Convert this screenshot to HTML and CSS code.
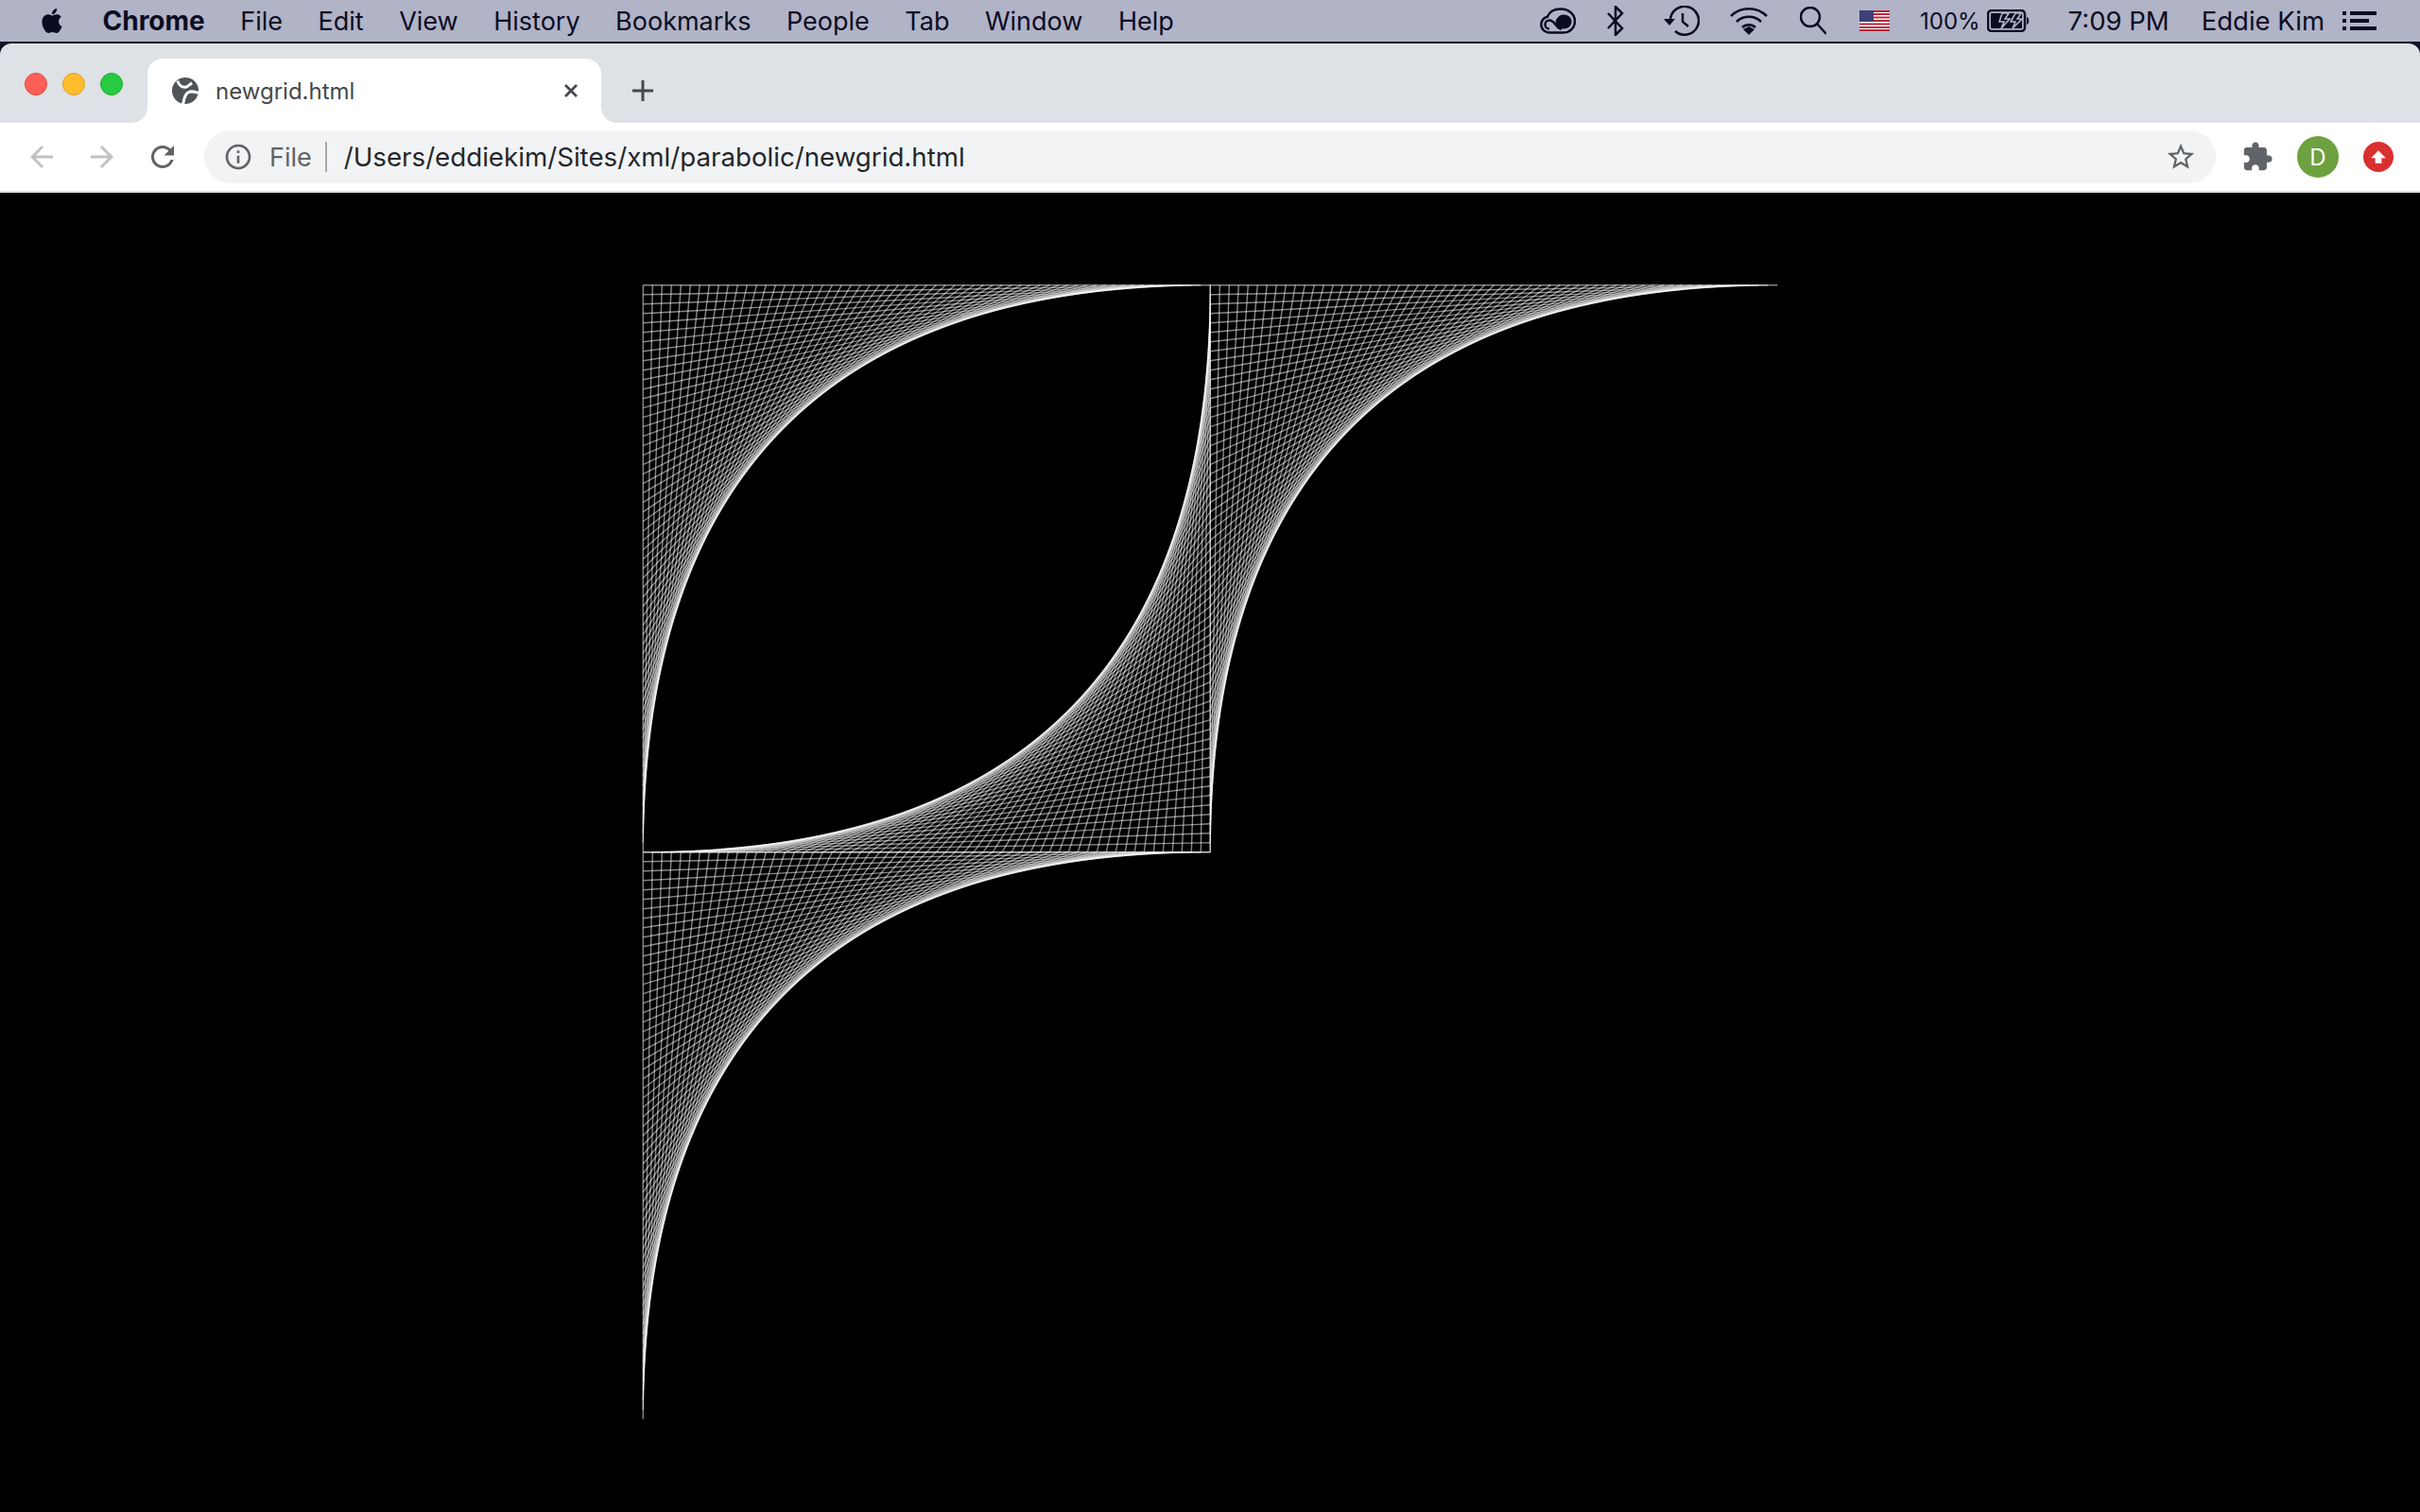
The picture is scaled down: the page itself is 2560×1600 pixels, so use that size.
FILE: index.html
```html
<!DOCTYPE html>
<html lang="en">
<head>
  <meta charset="UTF-8" />
  <title>newgrid.html</title>
  <link rel="stylesheet" href="styles.css">
</head>
<body>
  <header class="menubar">
    <nav class="menu-left">
      <svg class="apple" viewBox="0 0 24 24"><path d="M12.152 6.896c-.948 0-2.415-1.078-3.96-1.04-2.04.027-3.91 1.183-4.961 3.014-2.117 3.675-.546 9.103 1.519 12.09 1.013 1.454 2.208 3.09 3.792 3.039 1.52-.065 2.09-.987 3.935-.987 1.831 0 2.35.987 3.96.948 1.637-.026 2.676-1.48 3.676-2.948 1.156-1.688 1.636-3.325 1.662-3.415-.039-.013-3.182-1.221-3.22-4.857-.026-3.04 2.48-4.494 2.597-4.559-1.429-2.09-3.623-2.324-4.39-2.376-2-.156-3.675 1.09-4.61 1.09zM15.53 3.83c.843-1.012 1.4-2.427 1.245-3.83-1.207.052-2.662.805-3.532 1.818-.78.896-1.454 2.338-1.273 3.714 1.338.104 2.715-.688 3.559-1.701"/></svg>
      <span class="app-name">Chrome</span>
      <span>File</span>
      <span>Edit</span>
      <span>View</span>
      <span>History</span>
      <span>Bookmarks</span>
      <span>People</span>
      <span>Tab</span>
      <span>Window</span>
      <span>Help</span>
    </nav>
    <div class="menu-right">
      <svg class="st st-cc" viewBox="0 0 38 28"><path d="M10 26.500a8.500 8.500 0 0 1-2-16.800C10 4.500 15 1.500 22 1.500c8.500 0 15 5.500 15 13 0 7-5.500 12-12 12z" /><path d="M10 22.500a4.500 4.500 0 0 1 0-9c3.500 0 5 2.500 7 5 1.500 2 3.500 4 6 4" /><path class="solid" d="M17 13c2-3.500 4.500-5.500 8-5.500 5 0 8.500 3 8.500 7.500s-3.500 7.500-8.500 7.500c-3 0-5-1-7-4l-1.500-2z" /></svg>
      <svg class="st st-bt" viewBox="0 0 18 32"><path d="M1 8l15 16-7 7V1l7 7L1 24" /></svg>
      <svg class="st st-tm" viewBox="0 0 38 32"><path d="M7 16a15 15 0 1 1 5 11" /><path d="M20 8v9l6 5" /><path class="solid" d="M0 14h12l-6 7z" /></svg>
      <svg class="st st-wifi" viewBox="0 0 40 30"><path d="M1 10a27 27 0 0 1 38 0" /><path d="M7 16a19 19 0 0 1 26 0" /><path d="M13 22a10 10 0 0 1 14 0" /><path class="solid" d="M14 24l6-3 6 3-6 6z" /></svg>
      <svg class="st st-search" viewBox="0 0 28 30"><circle cx="11" cy="11" r="10" /><path d="M18 18l10 11" /></svg>
      <svg class="flag" viewBox="0 0 32 22"><rect width="32" height="22" fill="#fff"/><path d="M0 1h32M0 4h32M0 7.500h32M0 11h32M0 14.500h32M0 18h32M0 21h32" stroke="#b5283a" stroke-width="2"/><rect width="15" height="12" fill="#3d4177"/></svg>
      <span class="pct">100%</span>
      <svg class="st st-batt" viewBox="0 0 46 24"><rect x="1" y="1" width="39" height="22" rx="4" /><rect class="solid" x="4" y="4" width="33" height="16" rx="1" /><path class="bolt" d="M16 4h7l-4 6h5l-9 10 3-7h-5z" /><path class="bolt" d="M30 4h6l-4 6h5l-10 10 3-7h-5z" /><path class="solid" d="M42 8c3 1 3 7 0 8z" /></svg>
      <span class="clock">7:09 PM</span>
      <span class="user">Eddie Kim</span>
      <svg class="listicon" viewBox="0 0 36 20"><path d="M0 0h4v4H0zM8 0h28v4H8zM0 8h4v4H0zM8 8h20v4H8zM0 16h4v4H0zM8 16h28v4H8z"/></svg>
    </div>
  </header>

  <div class="window">
    <div class="tabstrip">
      <div class="lights">
        <i class="light red"></i>
        <i class="light yellow"></i>
        <i class="light green"></i>
      </div>
      <div class="tab">
        <svg class="favicon" viewBox="0 0 24 24"><circle cx="12" cy="12" r="12" fill="#505358"/><path d="M5 3C6 7 9 9.500 13 8.500 15 8 16 6.500 18 5M24 14C20 13 17 11.500 14 14 11 16.500 11 20 10 24" fill="none" stroke="#fff" stroke-width="2.600"/></svg>
        <span class="tab-title">newgrid.html</span>
        <svg class="tab-close" viewBox="0 0 16 16"><path d="M2 2l12 12M14 2L2 14"/></svg>
      </div>
      <svg class="newtab" viewBox="0 0 24 24"><path d="M12 1v22M1 12h22"/></svg>
    </div>

    <div class="toolbar">
      <svg class="nav-icon faded" viewBox="0 0 24 24"><path d="M20 11H7.830l5.590-5.590L12 4l-8 8 8 8 1.410-1.410L7.830 13H20v-2z"/></svg>
      <svg class="nav-icon faded" viewBox="0 0 24 24"><path d="M12 4l-1.410 1.410L16.170 11H4v2h12.170l-5.580 5.590L12 20l8-8z"/></svg>
      <svg class="nav-icon" viewBox="0 0 24 24"><path d="M17.650 6.350C16.200 4.900 14.210 4 12 4c-4.420 0-7.990 3.580-7.990 8s3.570 8 7.990 8c3.730 0 6.840-2.550 7.730-6h-2.080c-.82 2.330-3.040 4-5.650 4-3.310 0-6-2.690-6-6s2.690-6 6-6c1.660 0 3.140.69 4.220 1.780L13 11h7V4l-2.350 2.350z"/></svg>
      <div class="omnibox">
        <svg class="info" viewBox="0 0 24 24"><path d="M11 7h2v2h-2zm0 4h2v6h-2zm1-9C6.480 2 2 6.480 2 12s4.480 10 10 10 10-4.480 10-10S17.520 2 12 2zm0 18c-4.410 0-8-3.590-8-8s3.590-8 8-8 8 3.590 8 8-3.590 8-8 8z"/></svg>
        <span class="scheme">File</span>
        <i class="divider"></i>
        <span class="url">/Users/eddiekim/Sites/xml/parabolic/newgrid.html</span>
        <svg class="star" viewBox="0 0 24 24"><path d="M22 9.240l-7.190-.62L12 2 9.190 8.630 2 9.240l5.460 4.730L5.820 21 12 17.270 18.180 21l-1.630-7.030L22 9.240zM12 15.400l-3.760 2.270 1-4.280-3.320-2.880 4.380-.38L12 6.100l1.710 4.040 4.380.38-3.320 2.880 1 4.280L12 15.400z"/></svg>
      </div>
      <svg class="puzzle" viewBox="0 0 24 24"><path d="M20.500 11H19V7c0-1.100-.9-2-2-2h-4V3.500C13 2.120 11.880 1 10.500 1S8 2.120 8 3.500V5H4c-1.100 0-1.990.9-1.990 2v3.800H3.500c1.490 0 2.700 1.210 2.700 2.700s-1.210 2.700-2.700 2.700H2V20c0 1.100.9 2 2 2h3.800v-1.500c0-1.490 1.210-2.700 2.700-2.700 1.490 0 2.700 1.210 2.700 2.700V22H17c1.100 0 2-.9 2-2v-4h1.500c1.380 0 2.500-1.120 2.500-2.500S21.880 11 20.500 11z"/></svg>
      <div class="avatar">D</div>
      <div class="update">
        <svg viewBox="0 0 16 16"><path d="M8 2l7 7h-4v5H5V9H1z"/></svg>
      </div>
    </div>

    <main class="content">
      <svg id="grid" class="grid" width="1202" height="1202" viewBox="0 0 1202 1202"></svg>
    </main>
  </div>

  <script src="grid.js"></script>
</body>
</html>
```

FILE: styles.css
```css
* {
  box-sizing: border-box;
}

html, body {
  margin: 0;
  height: 1600px;
  overflow: hidden;
}

body {
  font-family: 'Inter', 'Liberation Sans', sans-serif;
  background: #11122a;
  display: flex;
  flex-direction: column;
}

.menubar {
  height: 46px;
  flex: none;
  background: #b1b3c7;
  border-bottom: 2px solid #11122a;
  color: #0b0c22;
  font-size: 27px;
  display: flex;
  align-items: center;
  justify-content: space-between;
}

.menu-left {
  display: flex;
  align-items: center;
  gap: 37.500px;
  padding-left: 42px;
}

.apple {
  width: 26px;
  height: 28px;
  margin-right: 3px;
  fill: #0b0c22;
}

.app-name {
  font-weight: 700;
  font-size: 28px;
}

.menu-right {
  display: flex;
  align-items: center;
  padding-right: 46px;
}

.st {
  fill: none;
  stroke: #0b0c22;
  stroke-width: 2.500;
}

.st .solid {
  fill: #0b0c22;
  stroke: none;
}

.st .bolt {
  fill: #0b0c22;
  stroke: #b1b3c7;
  stroke-width: 1.600;
}

.st-cc {
  width: 38px;
  height: 28px;
}

.st-bt {
  width: 18px;
  height: 32px;
  margin-left: 33px;
}

.st-tm {
  width: 38px;
  height: 32px;
  margin-left: 42px;
}

.st-wifi {
  width: 40px;
  height: 30px;
  margin-left: 32px;
}

.st-search {
  width: 28px;
  height: 30px;
  margin-left: 34px;
}

.flag {
  width: 32px;
  height: 22px;
  margin-left: 35px;
}

.pct {
  margin-left: 32px;
  font-size: 24px;
}

.st-batt {
  width: 46px;
  height: 24px;
  margin-left: 7px;
}

.clock {
  margin-left: 40px;
  font-size: 27.500px;
}

.user {
  margin-left: 34px;
  font-size: 27.500px;
}

.listicon {
  width: 36px;
  height: 20px;
  margin-left: 19px;
  fill: #0b0c22;
}

.window {
  flex: 1;
  display: flex;
  flex-direction: column;
  border-radius: 12px 12px 0 0;
  overflow: hidden;
  background: #000;
}

.tabstrip {
  height: 84px;
  flex: none;
  background: #dee1e6;
  display: flex;
  align-items: flex-end;
}

.lights {
  display: flex;
  gap: 16px;
  width: 156px;
  padding-left: 26px;
  align-self: flex-start;
  padding-top: 31px;
}

.light {
  width: 24px;
  height: 24px;
  border-radius: 50%;
}

.red {
  background: #ff5f57;
  border: 1px solid #e2463f;
}

.yellow {
  background: #ffbd2e;
  border: 1px solid #dfa123;
}

.green {
  background: #28ca42;
  border: 1px solid #1dad2b;
}

.tab {
  position: relative;
  width: 480px;
  height: 68px;
  background: #fff;
  border-radius: 16px 16px 0 0;
  display: flex;
  align-items: center;
  padding: 0 24px 0 26px;
}

/* the little flares where the tab meets the toolbar */
.tab::before,
.tab::after {
  content: "";
  position: absolute;
  bottom: 0;
  width: 16px;
  height: 16px;
  background: radial-gradient(circle at 0 0, #dee1e6 15.500px, #fff 16px);
}

.tab::before {
  left: -16px;
}

.tab::after {
  right: -16px;
  transform: scaleX(-1);
}

.favicon {
  width: 28px;
  height: 28px;
  flex: none;
}

.tab-title {
  margin-left: 18px;
  font-size: 24px;
  color: #45484d;
  flex: 1;
}

.tab-close {
  width: 16px;
  height: 16px;
  fill: none;
  stroke: #45484d;
  stroke-width: 2.800;
}

.newtab {
  width: 24px;
  height: 24px;
  margin: 0 0 22px 32px;
  fill: none;
  stroke: #45484d;
  stroke-width: 3;
}

.toolbar {
  height: 74px;
  flex: none;
  background: #fff;
  border-bottom: 2px solid #dadce0;
  display: flex;
  align-items: center;
  padding-left: 26px;
}

.nav-icon {
  width: 36px;
  height: 36px;
  margin-right: 28px;
  fill: #606367;
}

.nav-icon.faded {
  fill: #c0c2c5;
}

.omnibox {
  width: 2128px;
  height: 56px;
  margin-left: -2px;
  background: #f1f3f4;
  border-radius: 28px;
  display: flex;
  align-items: center;
  padding: 0 20px 0 20px;
  font-size: 27px;
}

.info {
  width: 32px;
  height: 32px;
  fill: #606367;
  flex: none;
}

.scheme {
  margin-left: 17px;
  color: #606367;
}

.divider {
  width: 2px;
  height: 32px;
  margin: 0 18px 0 14px;
  background: #a8aaad;
}

.url {
  flex: 1;
  font-size: 27.700px;
  color: #24262a;
}

.star {
  width: 34px;
  height: 34px;
  fill: #606367;
}

.puzzle {
  width: 34px;
  height: 34px;
  margin-left: 27px;
  fill: #606367;
}

.avatar {
  width: 44px;
  height: 44px;
  margin-left: 25px;
  border-radius: 50%;
  background: #6ea13f;
  color: #fff;
  font-size: 24px;
  display: flex;
  align-items: center;
  justify-content: center;
}

.update {
  width: 32px;
  height: 32px;
  margin-left: 26px;
  border-radius: 50%;
  background: #d93030;
  display: flex;
  align-items: center;
  justify-content: center;
}

.update svg {
  width: 18px;
  height: 18px;
  fill: #fff;
}

.content {
  flex: 1;
  background: #000;
  padding: 97px 0 0 680px;
}

.grid {
  display: block;
  overflow: visible;
}

.grid line {
  stroke: #fff;
  stroke-width: 1.400;
  stroke-opacity: 0.52;
}
```

FILE: grid.js
```js
// each figure is one string-art square: a corner plus the direction of its two edges
const SIZE = 600;
const STEP = 10;
const figures = [
  { x: 0, y: 0, dx: 1, dy: 1 },
  { x: 600, y: 0, dx: 1, dy: 1 },
  { x: 600, y: 600, dx: -1, dy: -1 },
  { x: 0, y: 600, dx: 1, dy: 1 }
];

const grid = document.getElementById('grid');
const OFFSET_X = 0.3;
const OFFSET_Y = 0.7;

figures.forEach((f) => {
  for (let a = 0; a <= SIZE; a += STEP) {
    const line = document.createElementNS('http://www.w3.org/2000/svg', 'line');
    line.setAttribute('x1', f.x + OFFSET_X);
    line.setAttribute('y1', f.y + f.dy * a + OFFSET_Y);
    line.setAttribute('x2', f.x + f.dx * (SIZE - a) + OFFSET_X);
    line.setAttribute('y2', f.y + OFFSET_Y);
    grid.appendChild(line);
  }
});
```
